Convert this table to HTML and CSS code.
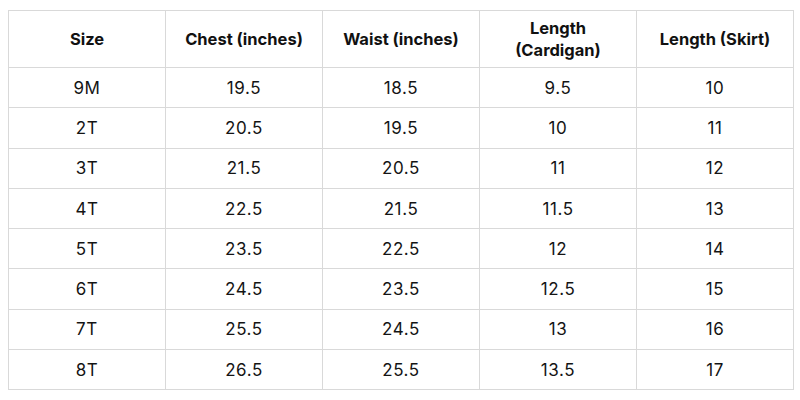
FILE: index.html
```html
<!DOCTYPE html>
<html>
<head>
<meta charset="utf-8">
<link rel="stylesheet" href="styles.css">
</head>
<body>
<table class="size-table">
  <thead>
    <tr>
      <th>Size</th>
      <th>Chest (inches)</th>
      <th>Waist (inches)</th>
      <th>Length<br>(Cardigan)</th>
      <th>Length (Skirt)</th>
    </tr>
  </thead>
  <tbody>
    <tr><td>9M</td><td>19.5</td><td>18.5</td><td>9.5</td><td>10</td></tr>
    <tr><td>2T</td><td>20.5</td><td>19.5</td><td>10</td><td>11</td></tr>
    <tr><td>3T</td><td>21.5</td><td>20.5</td><td>11</td><td>12</td></tr>
    <tr><td>4T</td><td>22.5</td><td>21.5</td><td>11.5</td><td>13</td></tr>
    <tr><td>5T</td><td>23.5</td><td>22.5</td><td>12</td><td>14</td></tr>
    <tr><td>6T</td><td>24.5</td><td>23.5</td><td>12.5</td><td>15</td></tr>
    <tr><td>7T</td><td>25.5</td><td>24.5</td><td>13</td><td>16</td></tr>
    <tr><td>8T</td><td>26.5</td><td>25.5</td><td>13.5</td><td>17</td></tr>
  </tbody>
</table>
</body>
</html>
```
FILE: styles.css
```css
html, body {
  margin: 0;
  padding: 0;
  background: #ffffff;
}
body {
  padding: 10px 0 0 8px;
  font-family: "Inter", "Liberation Sans", sans-serif;
  color: #141414;
}
.size-table {
  border-collapse: collapse;
  table-layout: fixed;
  width: 786px;
}
.size-table th,
.size-table td {
  border: 1px solid #d9d9d9;
  text-align: center;
  padding: 0;
}
.size-table th {
  height: 56px;
  font-size: 16.5px;
  font-weight: 700;
  line-height: 22px;
  color: #111111;
}
.size-table td {
  height: 39.3px;
  font-size: 17px;
  font-weight: 400;
  letter-spacing: 0.6px;
}
```
